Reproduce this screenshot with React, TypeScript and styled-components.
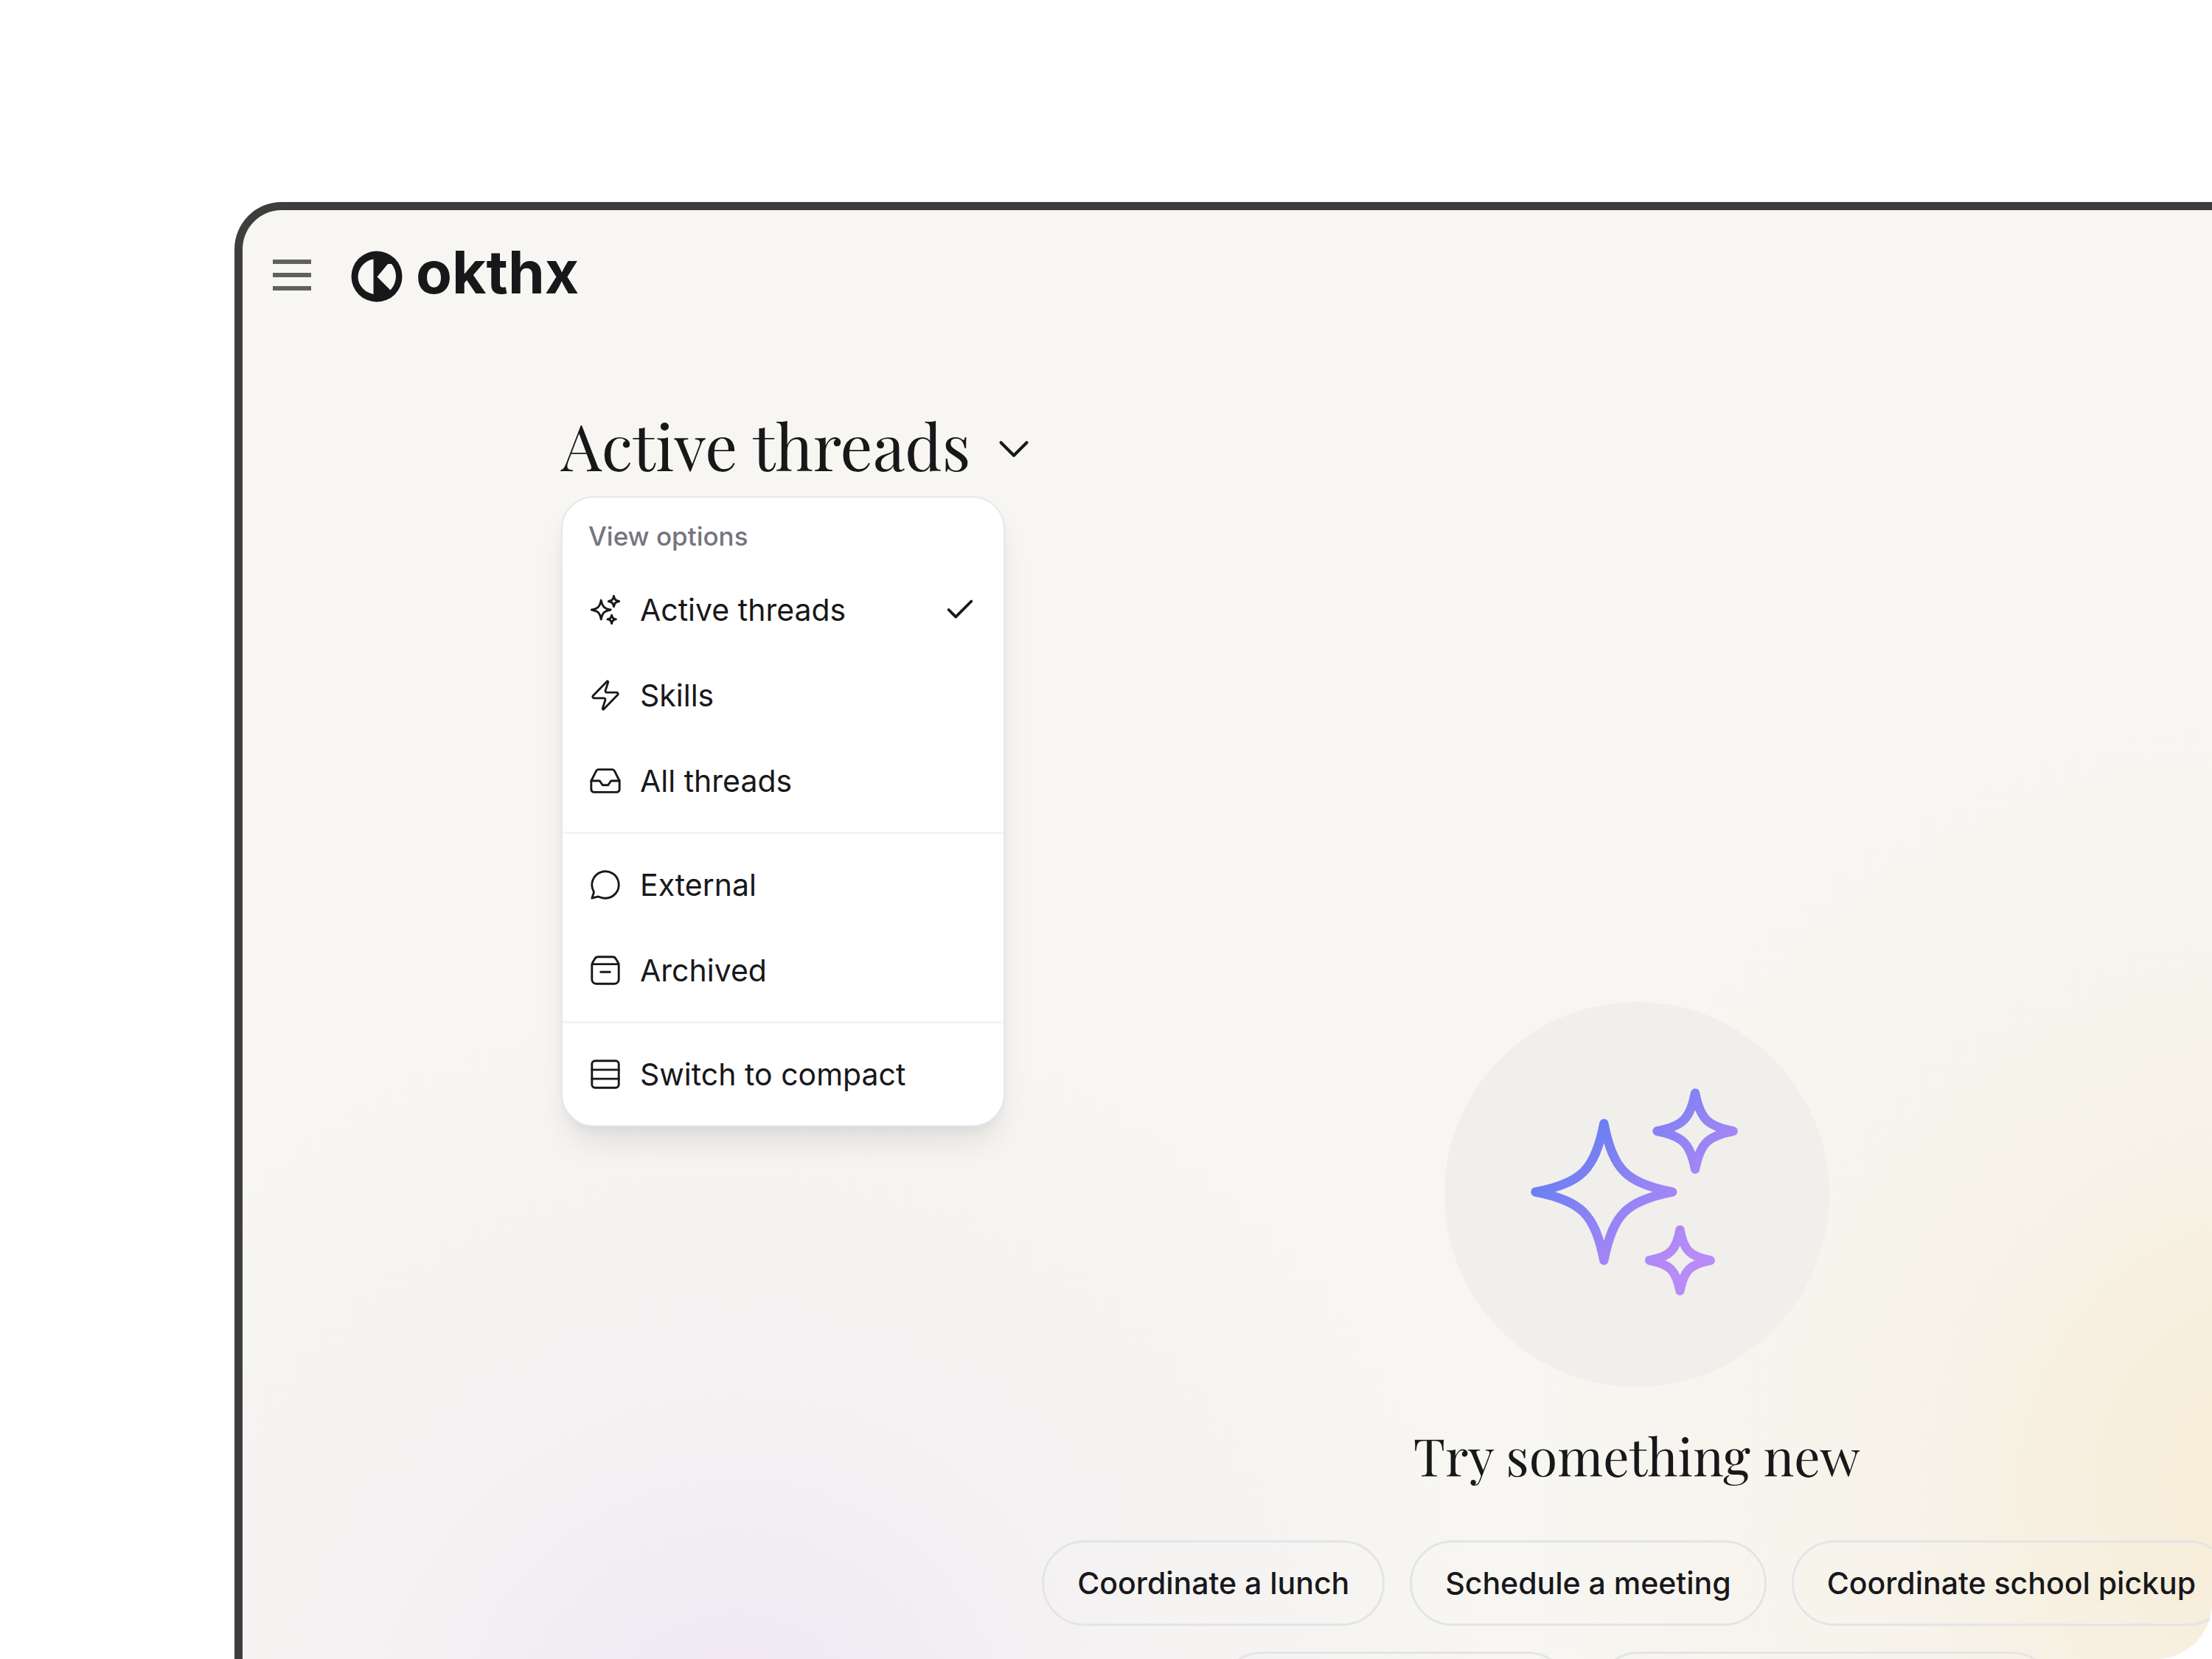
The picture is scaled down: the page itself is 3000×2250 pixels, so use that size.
import React, { useState } from "react";
import styled, { createGlobalStyle } from "styled-components";
import { Check, ChevronDown, Inbox, Zap } from "lucide-react";

const ink = "#18181b";
const sans = `Inter, "Liberation Sans", sans-serif`;
const serif = `"Playfair Display", "Liberation Serif", serif`;

const GlobalStyle = createGlobalStyle`
  *, *::before, *::after { box-sizing: border-box; }
  html, body { margin: 0; background: #ffffff; }
  body { font-family: ${sans}; color: ${ink}; overflow: hidden; }
  button { font: inherit; color: inherit; background: none; border: 0; padding: 0; margin: 0; cursor: pointer; }
`;

const Stage = styled.div`
  display: flex;
  height: 100vh;
  padding: 274px 0 0 318px;
`;

const Device = styled.div`
  flex: 1;
  min-width: 0;
  overflow: hidden;
  border: solid #3e3e3e;
  border-width: 11px 0 0 11px;
  border-radius: 64px 0 76px 0;
  background:
    radial-gradient(circle 1050px at 104% 88%, #f7ebd4 0%, rgba(247, 237, 216, 0.85) 20%, rgba(247, 240, 226, 0.5) 50%, rgba(247, 246, 242, 0) 100%),
    radial-gradient(circle 1040px at 25% 107%, #eee6f3 0%, rgba(240, 233, 243, 0.85) 20%, rgba(243, 239, 243, 0.55) 50%, rgba(247, 246, 242, 0) 100%),
    #f7f6f2;
`;

const TopBar = styled.header`
  display: flex;
  align-items: center;
  height: 180px;
  padding-left: 32px;
  gap: 45px;
`;

const MenuButton = styled.button`
  display: grid;
  place-items: center;
  width: 70px;
  height: 70px;
`;

const Bars = styled.span`
  display: grid;
  gap: 12px;
  width: 52px;
  margin-bottom: 4px;

  &::before, &::after { content: ""; }
  &::before, &::after, & > i { height: 6px; background: #606060; }
`;

const Brand = styled.a`
  display: flex;
  align-items: center;
  gap: 18px;
  color: ${ink};
  text-decoration: none;
`;

const Wordmark = styled.span`
  font-size: 80px;
  line-height: 88px;
  font-weight: 700;
  padding-bottom: 12px;
`;

const Main = styled.main`
  display: flex;
  flex-direction: column;
  padding: 84px 0 0 432px;
`;

const Heading = styled.div`
  position: relative;
  align-self: flex-start;
`;

const Title = styled.h1`
  margin: 0;
  padding-bottom: 12px;
  font-family: ${serif};
  font-size: 87px;
  line-height: 108px;
  font-weight: 400;
`;

const TitleButton = styled.button`
  display: flex;
  align-items: center;
  gap: 24px;
`;

const Menu = styled.div`
  position: absolute;
  top: 124px;
  left: 0;
  width: 602px;
  padding: 10px 0 11px;
  background: #ffffff;
  border: 2px solid #e6e6ee;
  border-radius: 44px;
  box-shadow: 0 28px 44px -8px rgba(0, 0, 0, 0.09), 0 8px 16px -6px rgba(0, 0, 0, 0.07);
`;

const MenuLabel = styled.div`
  padding: 0 35px;
  font-size: 35px;
  line-height: 84px;
  font-weight: 500;
  color: #75757e;
`;

const MenuItem = styled.button`
  display: flex;
  align-items: center;
  gap: 24px;
  width: 100%;
  height: 116px;
  padding: 0 36px 0 35px;
  font-size: 41px;
  text-align: left;
`;

const ItemText = styled.span`
  flex: 1;
`;

const Divider = styled.hr`
  height: 3px;
  margin: 11px 0;
  border: 0;
  background: #f4f4f5;
`;

const EmptyState = styled.section`
  display: flex;
  flex-direction: column;
  align-items: center;
  align-self: flex-end;
  margin: 690px -26px 0 0;
`;

const Badge = styled.div`
  display: grid;
  place-items: center;
  width: 522px;
  height: 522px;
  border-radius: 50%;
  background: #f0efeb;
`;

const Subtitle = styled.h2`
  margin: 40px 0 64px;
  font-family: ${serif};
  font-size: 70px;
  line-height: 104px;
  font-weight: 400;
`;

const Chips = styled.div`
  display: flex;
  gap: 34px;
  margin-bottom: 35px;
`;

const Chip = styled.button<{ $minWidth?: number }>`
  height: 116px;
  min-width: ${(p) => p.$minWidth ?? 0}px;
  padding: 0 45px;
  border: 3px solid #e4e4e7;
  border-radius: 58px;
  font-size: 41px;
  font-weight: 500;
  white-space: nowrap;
`;

/* Four-pointed star centred on (cx, cy); r is the distance to each tip. */
const star = (cx: number, cy: number, r: number) => {
  const k = r / 6.75;
  const p = (x: number, y: number) => `${cx + x * k} ${cy + y * k}`;
  const quarter = (sx: number, sy: number, fromTop: boolean) => {
    const pts = [
      [0, 6.75], [0.45, 4.4], [1.05, 2.95], [2, 2], [2.95, 1.05], [4.4, 0.45], [6.75, 0],
    ].map(([x, y]) => p(x * sx, y * sy));
    const o = fromTop ? pts : pts.reverse();
    return `C${o[1]} ${o[2]} ${o[3]}C${o[4]} ${o[5]} ${o[6]}`;
  };
  return `M${p(0, -6.75)}${quarter(1, -1, true)}${quarter(1, 1, false)}${quarter(-1, 1, true)}${quarter(-1, -1, false)}Z`;
};

const SPARKLES = star(9, 12, 6.75) + star(18, 6, 3.75) + star(16.5, 18.75, 3);

const line = {
  width: 46,
  height: 46,
  viewBox: "0 0 24 24",
  fill: "none",
  stroke: "currentColor",
  strokeWidth: 1.5,
  strokeLinecap: "round" as const,
  strokeLinejoin: "round" as const,
  "aria-hidden": true,
};

const SparklesIcon = () => (
  <svg {...line}>
    <path d={SPARKLES} />
  </svg>
);

const ChatIcon = () => (
  <svg {...line}>
    <path d="M12 21.5a9.5 9.5 0 1 0-8.3-4.9c.2.4.2.6.1 1L2.5 21.5l3.9-1.1c.4-.1.7 0 1 .1a9.5 9.5 0 0 0 4.6 1Z" />
  </svg>
);

const ArchiveIcon = () => (
  <svg {...line}>
    <path d="M2.5 8.2v10.3a3 3 0 0 0 3 3h13a3 3 0 0 0 3-3V8.2a3 3 0 0 0-.4-1.5l-1.7-2.9a2.6 2.6 0 0 0-2.2-1.3H6.8a2.6 2.6 0 0 0-2.2 1.3L2.9 6.7a3 3 0 0 0-.4 1.5Z" />
    <path d="M2.8 7.6h18.4M8.7 13.2h6.6" />
  </svg>
);

const RowsIcon = () => (
  <svg {...line}>
    <rect x="2.5" y="2.5" width="19" height="19" rx="2.2" />
    <path d="M2.5 8.8h19M2.5 15.2h19" />
  </svg>
);

const GradientSparkles = () => (
  <svg width="330" height="330" viewBox="0.25 0.25 24 24" fill="none" aria-hidden>
    <defs>
      <linearGradient id="spark" gradientUnits="userSpaceOnUse" x1="7" y1="7" x2="18" y2="18">
        <stop offset="0" stopColor="#6c7ff2" />
        <stop offset="0.6" stopColor="#a085f6" />
        <stop offset="1" stopColor="#b98bf8" />
      </linearGradient>
    </defs>
    <path d={SPARKLES} stroke="url(#spark)" strokeWidth="0.9" strokeLinecap="round" strokeLinejoin="round" />
  </svg>
);

const LogoMark = () => (
  <svg width="70" height="70" viewBox="0 0 70 70" aria-hidden>
    <path
      fill={ink}
      fillRule="evenodd"
      d="M35 .5a34.5 34.5 0 1 0 0 69a34.5 34.5 0 1 0 0-69ZM30.500 11.500V59A25.500 24.500 0 0 1 9.500 35.500A25.500 25 0 0 1 30.500 11.500ZM35.500 35.500L50 18H55A27 27 0 0 1 61 35A29 29 0 0 1 53.500 53.500Z"
    />
  </svg>
);

const groups = [
  [
    { label: "Active threads", icon: <SparklesIcon />, checked: true },
    { label: "Skills", icon: <Zap size={46} strokeWidth={1.5} /> },
    { label: "All threads", icon: <Inbox size={46} strokeWidth={1.5} /> },
  ],
  [
    { label: "External", icon: <ChatIcon /> },
    { label: "Archived", icon: <ArchiveIcon /> },
  ],
  [{ label: "Switch to compact", icon: <RowsIcon /> }],
];

const suggestions = ["Coordinate a lunch", "Schedule a meeting", "Coordinate school pickup"];

export default function App() {
  const [open, setOpen] = useState(true);

  return (
    <>
      <GlobalStyle />
      <Stage>
        <Device>
          <TopBar>
            <MenuButton aria-label="Open navigation">
              <Bars>
                <i />
              </Bars>
            </MenuButton>
            <Brand href="#">
              <LogoMark />
              <Wordmark>okthx</Wordmark>
            </Brand>
          </TopBar>
          <Main>
            <Heading>
              <TitleButton aria-haspopup="menu" aria-expanded={open} onClick={() => setOpen(!open)}>
                <Title>Active threads</Title>
                <ChevronDown size={70} strokeWidth={1.4} />
              </TitleButton>
              {open && (
                <Menu role="menu">
                  <MenuLabel>View options</MenuLabel>
                  {groups.map((items, i) => (
                    <React.Fragment key={i}>
                      {i > 0 && <Divider />}
                      {items.map((item) => (
                        <MenuItem key={item.label} role="menuitem">
                          {item.icon}
                          <ItemText>{item.label}</ItemText>
                          {"checked" in item && <Check size={46} strokeWidth={2} />}
                        </MenuItem>
                      ))}
                    </React.Fragment>
                  ))}
                </Menu>
              )}
            </Heading>
            <EmptyState>
              <Badge>
                <GradientSparkles />
              </Badge>
              <Subtitle>Try something new</Subtitle>
              <Chips>
                {suggestions.map((text) => (
                  <Chip key={text}>{text}</Chip>
                ))}
              </Chips>
              <Chips>
                <Chip $minWidth={477} aria-label="Plan a trip" />
                <Chip $minWidth={623} aria-label="Organize a group dinner" />
              </Chips>
            </EmptyState>
          </Main>
        </Device>
      </Stage>
    </>
  );
}
